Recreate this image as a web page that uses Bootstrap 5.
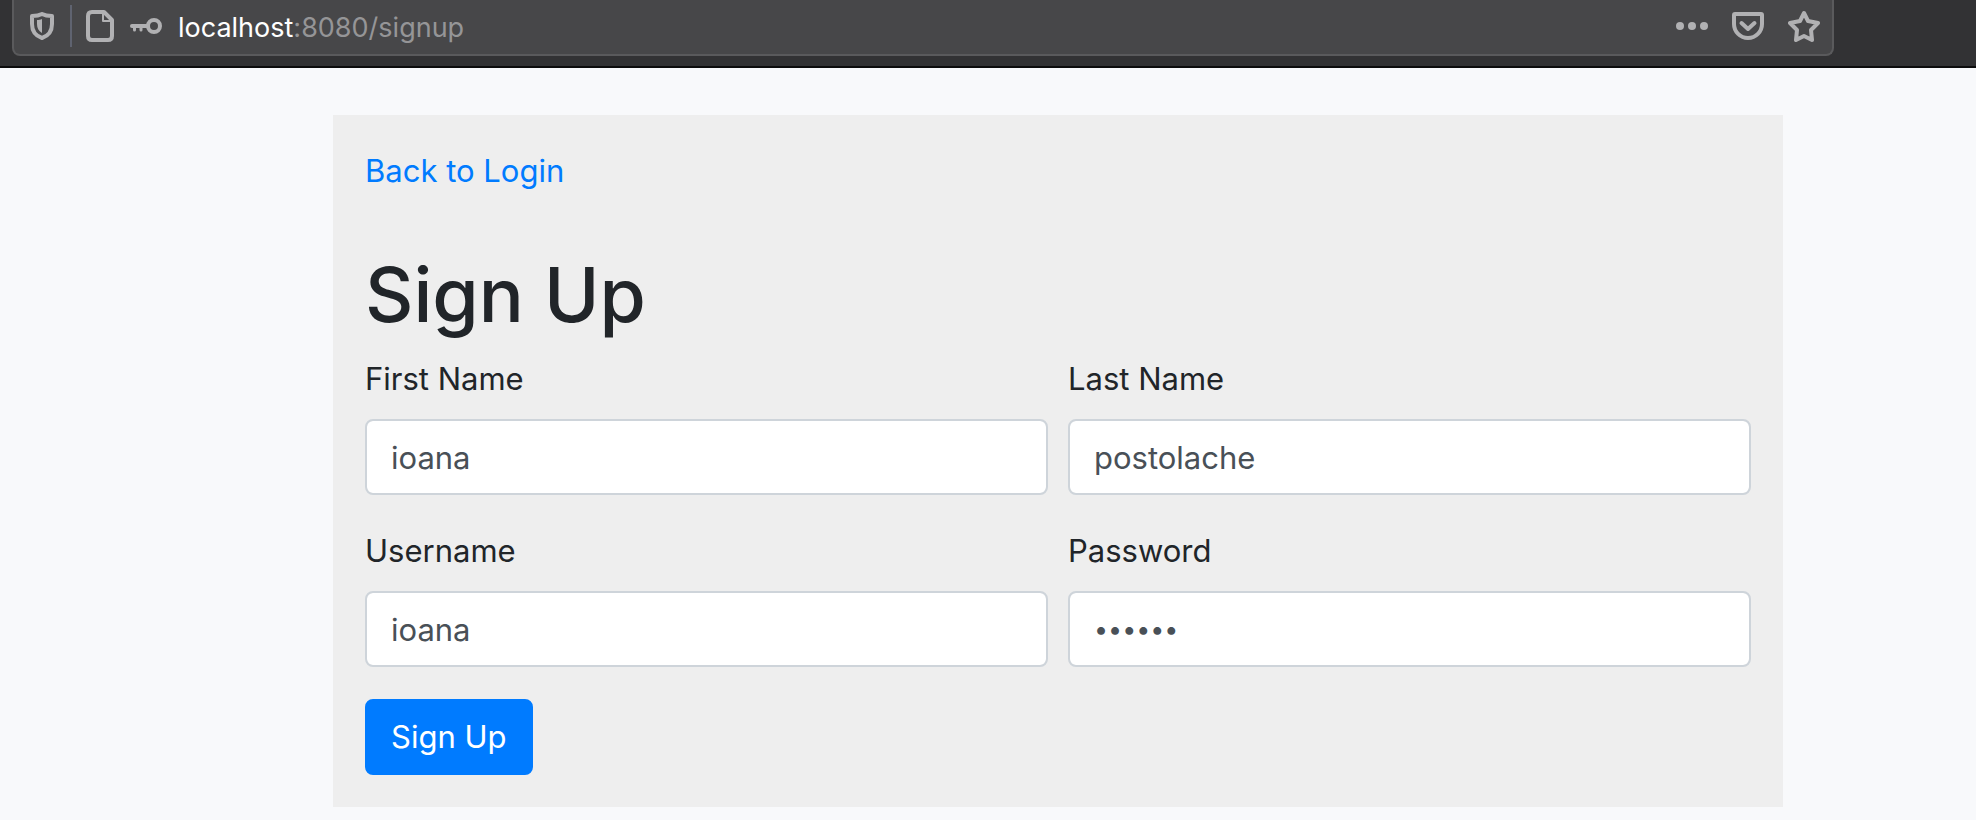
<!DOCTYPE html>
<html lang="en">
<head>
<meta charset="utf-8">
<meta name="viewport" content="width=device-width, initial-scale=1">
<title>Sign Up</title>
<link href="https://cdn.jsdelivr.net/npm/bootstrap@5.3.0/dist/css/bootstrap.min.css" rel="stylesheet">
<style>
  body { background: #f8f9fb; color: #212529; font-family: Inter, "Liberation Sans", sans-serif; font-size: 31px; line-height: 48px; }
  .toolbar { background: #323234; border-bottom: 2px solid #0c0c0d; padding: 0 142px 10px 12px; }
  .urlbar { height: 56px; background: #474749; border: 2px solid #5a5a5c; border-top: 0; border-radius: 0 0 8px 8px; padding: 0 12px 2px 16px; color: #b1b1b3; }
  .urlbar svg { display: block; fill: none; stroke: currentColor; stroke-width: 4; stroke-linejoin: round; stroke-linecap: round; }
  .urlbar .solid { fill: currentColor; stroke: none; }
  .icon-btn { color: inherit; background: none; border: 0; padding: 0; }
  .divider { width: 2px; height: 42px; background: #5f6370; margin: 0 14px 0 16px; }
  .address { font-size: 27px; line-height: 40px; color: #959597; margin-left: 16px; padding-top: 3px; }
  .address span { color: #fff; }
  .page { padding: 47px 193px 13px 333px; }
  .panel { background: #eee; padding: 32px; }
  .panel a { color: #007bff; }
  .panel h1 { font-size: 75px; line-height: 96px; font-weight: 500; margin: 52px 0 12px; }
  .fields { --bs-gutter-x: 20px; --bs-gutter-y: 32px; }
  .form-label { margin-bottom: 16px; }
  .form-control { height: 76px; font-size: 31px; line-height: 48px; padding: 12px 24px; border: 2px solid #ced4da; border-radius: 8px; color: #495057; }
  .form-control[type="password"] { font-size: 25px; }
  .btn-primary { --bs-btn-bg: #007bff; --bs-btn-border-color: #007bff; font-size: 31px; line-height: 48px; padding: 12px 24px; border-width: 2px; border-radius: 8px; margin-top: 32px; }
</style>
</head>
<body>
<header class="toolbar">
  <div class="urlbar d-flex align-items-center">
    <button type="button" class="icon-btn" aria-label="Tracking protection">
      <svg width="24" height="28" viewBox="0 0 24 28"><path d="M12 2 C9 3.600 5 4 2 4 V12 C2 19 6 24 12 26 C18 24 22 19 22 12 V4 C19 4 15 3.600 12 2Z"/><path class="solid" d="M12 7 V21 C8.500 19 7 16 7 12 V8 C9 8 10.500 7.700 12 7Z"/></svg>
    </button>
    <div class="divider"></div>
    <button type="button" class="icon-btn" aria-label="Site information">
      <svg width="28" height="32" viewBox="0 0 28 32"><path d="M6 2 H18 L26 10 V26 Q26 30 22 30 H6 Q2 30 2 26 V6 Q2 2 6 2Z"/><path stroke-width="2" d="M17 3 V11 H25"/></svg>
    </button>
    <button type="button" class="icon-btn ms-3" aria-label="Saved login">
      <svg width="32" height="16" viewBox="0 0 32 16"><circle cx="24" cy="8" r="6"/><path d="M2 8 H17"/><path d="M4.500 9 V12 M11 9 V12" stroke-width="3"/></svg>
    </button>
    <div class="address flex-grow-1"><span>localhost</span>:8080/signup</div>
    <div class="d-flex align-items-center gap-4">
      <button type="button" class="icon-btn" aria-label="Page actions">
        <svg width="32" height="8" viewBox="0 0 32 8"><g class="solid"><circle cx="4" cy="4" r="4"/><circle cx="16" cy="4" r="4"/><circle cx="28" cy="4" r="4"/></g></svg>
      </button>
      <button type="button" class="icon-btn" aria-label="Save to Pocket">
        <svg width="32" height="28" viewBox="0 0 32 28"><path d="M3 2 H29 Q30 2 30 3 V12 A14 14 0 0 1 2 12 V3 Q2 2 3 2Z"/><path d="M9.500 11 L16 17 L22.500 11"/></svg>
      </button>
      <button type="button" class="icon-btn" aria-label="Bookmark this page">
        <svg width="32" height="32" viewBox="0 0 32 32"><path d="M16 3 L20 11 L30 13 L23 20 L24 30 L16 26 L8 30 L9 20 L2 13 L12 11Z"/></svg>
      </button>
    </div>
  </div>
</header>
<main class="page">
  <div class="panel">
    <a href="#" class="text-decoration-none">Back to Login</a>
    <h1>Sign Up</h1>
    <form>
      <div class="row fields">
        <div class="col-6">
          <label class="form-label d-block" for="first">First Name</label>
          <input class="form-control" id="first" type="text" value="ioana">
        </div>
        <div class="col-6">
          <label class="form-label d-block" for="last">Last Name</label>
          <input class="form-control" id="last" type="text" value="postolache">
        </div>
        <div class="col-6">
          <label class="form-label d-block" for="user">Username</label>
          <input class="form-control" id="user" type="text" value="ioana">
        </div>
        <div class="col-6">
          <label class="form-label d-block" for="pass">Password</label>
          <input class="form-control" id="pass" type="password" value="secret">
        </div>
      </div>
      <button type="submit" class="btn btn-primary d-block">Sign Up</button>
    </form>
  </div>
</main>
<script src="https://cdn.jsdelivr.net/npm/bootstrap@5.3.0/dist/js/bootstrap.bundle.min.js"></script>
</body>
</html>
